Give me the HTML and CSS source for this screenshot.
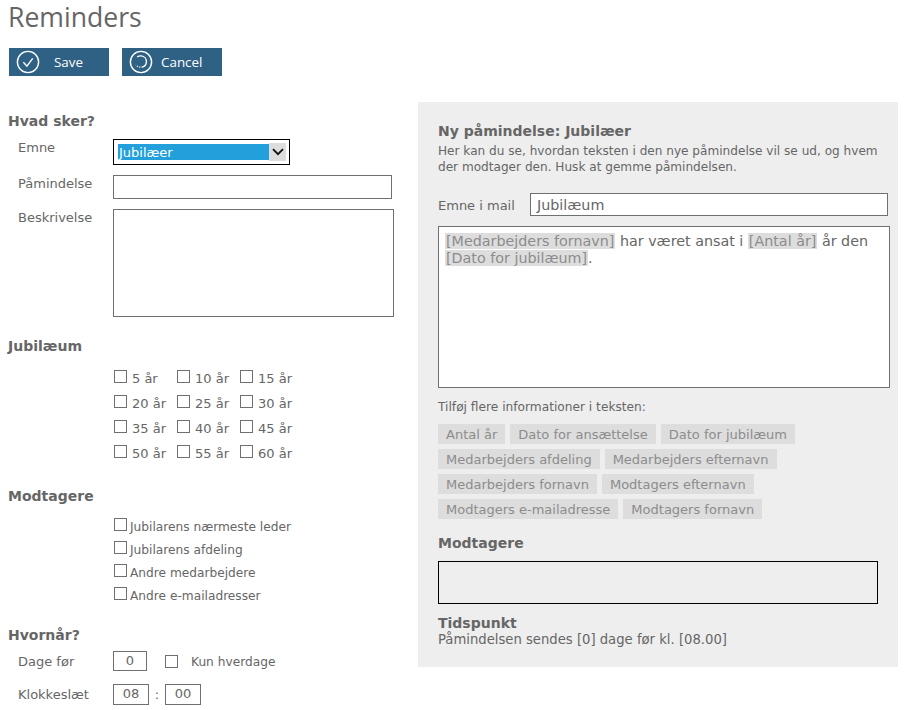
FILE: index.html
```html
<!DOCTYPE html>
<html lang="da">
<head>
    <meta charset="UTF-8">
    <title>Reminders</title>
    <link rel="stylesheet" href="styles.css">
</head>
<body>
    <h1 class="page-title">Reminders</h1>

    <div class="toolbar">
        <button class="tool-btn save-btn">
            <svg class="tool-icon" viewBox="0 0 24 24"><circle cx="12" cy="12" r="10.6"/><path d="M7.4 12.2l3.5 3.9 5.8-7.8"/></svg>
            <span>Save</span>
        </button>
        <button class="tool-btn cancel-btn">
            <svg class="tool-icon" viewBox="0 0 24 24"><circle cx="12" cy="12" r="10.6"/><path d="M8.2 6.900c1.200-.8 2.600-1.100 4-1 3.200.3 5.300 3 5.200 5.900-.1 2.900-2.200 5.100-4.900 5.300"/><path class="icon-dots" d="M11.300 17.100c-1.800 0-3.500-.8-4.600-2.300"/></svg>
            <span>Cancel</span>
        </button>
    </div>

    <div class="columns">
        <form class="settings">
            <h2 class="section-title first">Hvad sker?</h2>
            <div class="field subject-row">
                <label>Emne</label>
                <div class="fake-select">
                    <span class="fake-option">Jubilæer</span>
                    <span class="fake-arrow"><svg viewBox="0 0 12 8"><path d="M1 1.200l5 5 5-5"/></svg></span>
                </div>
            </div>
            <div class="field reminder-row">
                <label>Påmindelse</label>
                <input class="text-input reminder-input" type="text">
            </div>
            <div class="field description-row">
                <label>Beskrivelse</label>
                <textarea class="text-input description-input"></textarea>
            </div>

            <h2 class="section-title jubilee-title">Jubilæum</h2>
            <div class="year-grid">
                <label class="check"><i class="box"></i>5 år</label>
                <label class="check"><i class="box"></i>10 år</label>
                <label class="check"><i class="box"></i>15 år</label>
                <label class="check"><i class="box"></i>20 år</label>
                <label class="check"><i class="box"></i>25 år</label>
                <label class="check"><i class="box"></i>30 år</label>
                <label class="check"><i class="box"></i>35 år</label>
                <label class="check"><i class="box"></i>40 år</label>
                <label class="check"><i class="box"></i>45 år</label>
                <label class="check"><i class="box"></i>50 år</label>
                <label class="check"><i class="box"></i>55 år</label>
                <label class="check"><i class="box"></i>60 år</label>
            </div>

            <h2 class="section-title receivers-title">Modtagere</h2>
            <div class="receiver-list">
                <label class="check"><i class="box"></i>Jubilarens nærmeste leder</label>
                <label class="check"><i class="box"></i>Jubilarens afdeling</label>
                <label class="check"><i class="box"></i>Andre medarbejdere</label>
                <label class="check"><i class="box"></i>Andre e-mailadresser</label>
            </div>

            <h2 class="section-title when-title">Hvornår?</h2>
            <div class="field days-row">
                <label>Dage før</label>
                <span class="small-input days-input">0</span>
                <label class="check weekdays"><i class="box"></i>Kun hverdage</label>
            </div>
            <div class="field time-row">
                <label>Klokkeslæt</label>
                <span class="small-input time-input">08</span>
                <span class="colon">:</span>
                <span class="small-input time-input">00</span>
            </div>
        </form>

        <section class="preview">
            <h2 class="preview-title">Ny påmindelse: Jubilæer</h2>
            <p class="preview-intro">Her kan du se, hvordan teksten i den nye påmindelse vil se ud, og hvem der modtager den. Husk at gemme påmindelsen.</p>

            <div class="mail-subject">
                <label>Emne i mail</label>
                <div class="subject-box">Jubilæum</div>
            </div>

            <div class="mail-body"><span class="token">[Medarbejders fornavn]</span> har været ansat i <span class="token">[Antal år]</span> år den <span class="token">[Dato for jubilæum]</span>.</div>

            <p class="tags-label">Tilføj flere informationer i teksten:</p>
            <div class="tags">
                <span class="tag">Antal år</span>
                <span class="tag">Dato for ansættelse</span>
                <span class="tag">Dato for jubilæum</span>
                <span class="tag">Medarbejders afdeling</span>
                <span class="tag">Medarbejders efternavn</span>
                <span class="tag">Medarbejders fornavn</span>
                <span class="tag">Modtagers efternavn</span>
                <span class="tag">Modtagers e-mailadresse</span>
                <span class="tag">Modtagers fornavn</span>
            </div>

            <h3 class="preview-sub">Modtagere</h3>
            <div class="receivers-box"></div>

            <h3 class="preview-sub time-sub">Tidspunkt</h3>
            <p class="time-text">Påmindelsen sendes [0] dage før kl. [08.00]</p>
        </section>
    </div>
</body>
</html>
```

FILE: styles.css
```css
:root {
    --text: #666666;
    --blue: #2f6185;
    --panel: #eeeeee;
    --line: #707070;
}

* {
    box-sizing: border-box;
}

body {
    margin: 0;
    padding: 0 8px;
    background: #ffffff;
    color: var(--text);
    font-family: "DejaVu Sans", sans-serif;
    font-size: 12px;
}

.page-title {
    margin: 0;
    padding-top: 1px;
    height: 48px;
    font-family: "Open Sans", sans-serif;
    font-size: 26.6px;
    font-weight: 400;
    line-height: 32px;
}

/* knapper */
.toolbar {
    display: flex;
    gap: 13px;
    padding-left: 1px;
}

.tool-btn {
    display: flex;
    align-items: center;
    width: 100px;
    height: 28px;
    padding: 0 0 0 7px;
    border: none;
    background: var(--blue);
    color: #ffffff;
    font-family: "Open Sans", sans-serif;
    font-size: 13.4px;
}

.tool-icon {
    width: 24px;
    height: 24px;
    fill: none;
    stroke: #ffffff;
    stroke-width: 1.4;
}

.icon-dots {
    stroke-dasharray: 1 1.500;
}

.save-btn span {
    margin-left: 14px;
}

.cancel-btn span {
    margin-left: 8px;
}

.columns {
    display: flex;
    margin-top: 26px;
}

/* venstre side */
.settings {
    width: 410px;
}

.section-title {
    margin: 0;
    font-size: 14px;
    font-weight: 700;
    line-height: 17px;
}

.section-title.first {
    padding-top: 11px;
}

.jubilee-title {
    margin-top: 21px;
}

.receivers-title {
    margin-top: 26px;
}

.when-title {
    margin-top: 23px;
}

.field {
    display: flex;
    align-items: flex-start;
    padding-left: 10px;
}

.field > label:first-child {
    width: 95px;
    flex: none;
    padding-top: 1px;
    font-size: 13px;
    line-height: 16px;
}

.subject-row {
    margin-top: 9px;
}

.fake-select {
    display: flex;
    align-items: center;
    width: 177px;
    height: 26px;
    padding: 0 3px 0 4px;
    border: 1px solid #000000;
    background: #ffffff;
}

.fake-option {
    width: 151px;
    height: 16px;
    padding-left: 1px;
    background: #22a0dc;
    color: #ffffff;
    font-size: 13px;
    line-height: 17px;
}

.fake-arrow {
    display: flex;
    align-items: center;
    justify-content: center;
    width: 17px;
    height: 18px;
    background: #dddddd;
}

.fake-arrow svg {
    width: 12px;
    height: 8px;
    fill: none;
    stroke: #111111;
    stroke-width: 1.8;
}

.text-input {
    display: block;
    border: 1px solid var(--line);
    border-radius: 0;
    background: #ffffff;
    padding: 0;
    resize: none;
}

.reminder-row {
    margin-top: 10px;
}

.reminder-input {
    width: 279px;
    height: 24px;
}

.description-row {
    margin-top: 10px;
}

.description-input {
    width: 281px;
    height: 108px;
}

.check {
    display: flex;
    align-items: center;
    font-size: 12.2px;
    line-height: 16px;
    white-space: nowrap;
}

.box {
    display: block;
    flex: none;
    width: 13px;
    height: 13px;
    border: 1px solid var(--line);
    background: #ffffff;
}

.year-grid {
    display: grid;
    grid-template-columns: 63px 63px auto;
    row-gap: 9px;
    margin-top: 16px;
    padding-left: 106px;
}

.year-grid .check {
    font-size: 13px;
}

.year-grid .box {
    margin-right: 5px;
    margin-top: -6px;
}

.receiver-list {
    display: flex;
    flex-direction: column;
    gap: 7px;
    margin-top: 14px;
    padding-left: 106px;
}

.receiver-list .box {
    margin-right: 3px;
    margin-top: -5px;
}

.days-row {
    align-items: center;
    margin-top: 7px;
}

.small-input {
    display: block;
    height: 20px;
    border: 1px solid var(--line);
    font-size: 13px;
    line-height: 18px;
    text-align: center;
}

.days-input {
    width: 34px;
}

.weekdays {
    margin-left: 18px;
    padding-top: 1px;
}

.weekdays .box {
    margin-right: 13px;
    margin-top: -1px;
}

.time-row {
    align-items: center;
    margin-top: 13px;
}

.time-input {
    width: 36px;
    height: 21px;
}

.colon {
    width: 16px;
    text-align: center;
    font-size: 13px;
}

/* forhåndsvisning */
.preview {
    width: 480px;
    height: 565px;
    padding: 21px 20px 0;
    background: var(--panel);
}

.preview-title {
    margin: 0;
    font-size: 14px;
    font-weight: 700;
    line-height: 17px;
}

.preview-intro {
    margin: 3px 0 0;
    font-size: 12.1px;
    line-height: 16px;
}

.mail-subject {
    display: flex;
    align-items: center;
    margin-top: 18px;
}

.mail-subject label {
    width: 92px;
    flex: none;
    padding-top: 1px;
    font-size: 13px;
}

.subject-box {
    width: 358px;
    height: 23px;
    flex: none;
    padding-left: 6px;
    border: 1px solid var(--line);
    background: #ffffff;
    font-size: 14.3px;
    line-height: 23px;
}

.mail-body {
    width: 452px;
    height: 162px;
    margin-top: 10px;
    padding: 6px;
    border: 1px solid var(--line);
    background: #ffffff;
    font-size: 14.3px;
    line-height: 17px;
}

.token {
    padding: 0 1px;
    background: #dddddd;
    color: #8c8c8c;
}

.tags-label {
    margin: 11px 0 0;
    font-size: 12.2px;
    line-height: 16px;
}

.tags {
    display: flex;
    flex-wrap: wrap;
    gap: 5px;
    width: 400px;
    margin-top: 9px;
}

.tag {
    height: 20px;
    padding: 0 8px;
    background: #dddddd;
    color: #8c8c8c;
    font-size: 13px;
    line-height: 21px;
}

.preview-sub {
    margin: 16px 0 0;
    font-size: 14px;
    font-weight: 700;
    line-height: 17px;
}

.receivers-box {
    width: 440px;
    height: 43px;
    margin-top: 9px;
    border: 1px solid #000000;
}

.time-sub {
    margin-top: 11px;
}

.time-text {
    margin: 0;
    font-size: 13.2px;
    line-height: 15px;
}
```
